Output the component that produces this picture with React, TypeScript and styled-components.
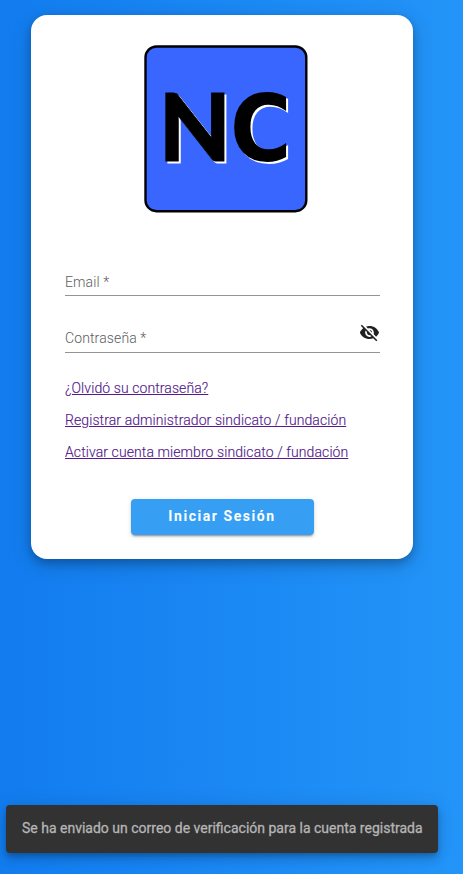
import React from "react";
import styled, { createGlobalStyle } from "styled-components";

const GlobalStyle = createGlobalStyle`
  * { box-sizing: border-box; }
  html, body { margin: 0; height: 100%; }
  body { font-family: Roboto, "Helvetica Neue", sans-serif; overflow: hidden; }
`;

const Page = styled.div`
  display: flex;
  flex-direction: column;
  justify-content: space-between;
  height: 874px;
  padding: 15px 25px 21px 6px;
  background: linear-gradient(to right, #127cef, #2394f8);
`;

const Card = styled.form`
  display: flex;
  flex-direction: column;
  width: 382px;
  height: 544px;
  margin-left: 25px;
  padding: 29px 33px 24px 34px;
  border-radius: 16px;
  background: #fff;
  box-shadow: 0 4px 8px 0 rgba(0, 0, 0, 0.2), 0 6px 20px 0 rgba(0, 0, 0, 0.19);
`;

const Logo = styled.svg`
  display: block;
  width: 166px;
  height: 170px;
  margin-left: 78px;
  flex: none;
`;

const Initials = styled.g`
  font-weight: 900;
  filter: drop-shadow(2px 2px 0 #fff);
`;

const Fields = styled.div`
  height: 114px;
  margin-top: 25px;
`;

const Field = styled.label<{ $lift?: number }>`
  display: flex;
  align-items: flex-end;
  justify-content: space-between;
  height: 57px;
  padding-bottom: ${({ $lift = 5 }) => $lift}px;
  border-bottom: 1px solid #949494;
  color: #5c5c5c;
  font-size: 14px;
  font-weight: 300;
  line-height: 16px;
  letter-spacing: 0.12px;
`;

const ToggleIcon = styled.svg`
  width: 21px;
  height: 21px;
  margin-bottom: 3px;
  fill: #212121;
`;

const Links = styled.nav`
  display: flex;
  flex-direction: column;
  align-items: flex-start;
  margin-top: 19px;
`;

const Link = styled.a`
  color: #551a8b;
  font-size: 14px;
  font-weight: 300;
  line-height: 32px;
  letter-spacing: 0.09px;
  text-decoration: underline;
  -webkit-text-stroke: 0.15px #551a8b;
`;

const SubmitButton = styled.button`
  width: 183px;
  height: 36px;
  margin: auto 0 0 66px;
  padding: 0 1px 2px 0;
  border: 0;
  border-radius: 4px;
  background: #369ff4;
  color: #fff;
  font: 700 14px/34px Roboto, sans-serif;
  letter-spacing: 1.55px;
  box-shadow: 0 3px 1px -2px rgba(0, 0, 0, 0.2), 0 2px 2px 0 rgba(0, 0, 0, 0.14),
    0 1px 5px 0 rgba(0, 0, 0, 0.12);
`;

const Snackbar = styled.div`
  display: flex;
  align-items: center;
  width: 432px;
  height: 48px;
  padding: 0 16px 2px;
  border-radius: 4px;
  background: #323232;
  color: #b5b5b5;
  font-size: 14px;
  line-height: 20px;
  white-space: nowrap;
  -webkit-text-stroke: 0.3px #b5b5b5;
  box-shadow: 0 3px 5px -1px rgba(0, 0, 0, 0.2), 0 6px 10px 0 rgba(0, 0, 0, 0.14),
    0 1px 18px 0 rgba(0, 0, 0, 0.12);
`;

const LINKS = [
  "¿Olvidó su contraseña?",
  "Registrar administrador sindicato / fundación",
  "Activar cuenta miembro sindicato / fundación",
];

const VisibilityOff = () => (
  <ToggleIcon viewBox="0 0 24 24">
    <path d="M12 7c2.76 0 5 2.24 5 5 0 .65-.13 1.26-.36 1.83l2.92 2.92c1.51-1.26 2.7-2.89 3.43-4.75-1.73-4.39-6-7.5-11-7.5-1.4 0-2.74.25-3.98.7l2.16 2.16C10.74 7.13 11.35 7 12 7zM2 4.27l2.28 2.28.46.46C3.08 8.3 1.78 10.02 1 12c1.73 4.39 6 7.5 11 7.5 1.55 0 3.03-.3 4.38-.84l.42.42L19.73 22 21 20.73 3.27 3 2 4.27zM7.53 9.8l1.55 1.55c-.05.21-.08.43-.08.65 0 1.66 1.34 3 3 3 .22 0 .44-.03.65-.08l1.55 1.55c-.67.33-1.41.53-2.2.53-2.76 0-5-2.24-5-5 0-.79.2-1.53.53-2.2zm4.31-.78l3.15 3.15.02-.16c0-1.66-1.34-3-3-3l-.17.01z" />
  </ToggleIcon>
);

const BrandLogo = () => (
  <Logo viewBox="143 44 166 170">
    <rect x="145.5" y="46.5" width="160.8" height="164.7" rx="11" fill="#3866ff" stroke="#000" strokeWidth="2.4" />
    <Initials>
      <text transform="translate(158.7 161) scale(1 1)" fontFamily="Lato" fontSize="93.5" stroke="#000" strokeWidth="0.9">N</text>
      <text transform="translate(229.9 161) scale(0.9 1)" fontFamily="DejaVu Sans" fontSize="93">C</text>
    </Initials>
  </Logo>
);

export default function App() {
  return (
    <>
      <GlobalStyle />
      <Page>
        <Card>
          <BrandLogo />
          <Fields>
            <Field>Email *</Field>
            <Field $lift={6}>
              Contraseña *
              <VisibilityOff />
            </Field>
          </Fields>
          <Links>
            {LINKS.map((text) => <Link key={text} href="#">{text}</Link>)}
          </Links>
          <SubmitButton type="button">Iniciar Sesión</SubmitButton>
        </Card>
        <Snackbar>Se ha enviado un correo de verificación para la cuenta registrada</Snackbar>
      </Page>
    </>
  );
}
